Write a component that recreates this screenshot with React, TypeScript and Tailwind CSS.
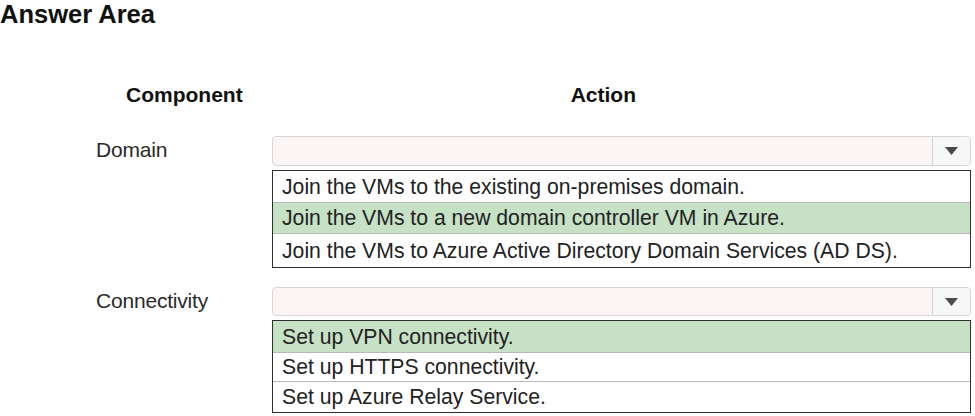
import { ReactNode } from 'react'

interface ChoiceProps {
  label: string
  options: string[]
  picked: number
  top: string
  boxH: string
  rowHeights: string[]
}

function Arrow(): JSX.Element {
  return (
    <svg width="13" height="8" viewBox="0 0 13 8">
      <path d="M0 0 L13 0 L6.5 8 Z" fill="#4a4a4a" />
    </svg>
  )
}

function Row({ children, green, h, last }: { children: ReactNode; green: boolean; h: string; last: boolean }): JSX.Element {
  return (
    <div
      className={`${h} flex items-center pl-[9px] text-[21.2px] leading-none ${
        green ? 'bg-[#c6e1c5]' : 'bg-white'
      } ${last ? '' : 'border-b border-[#b8b8b8]'}`}
    >
      {children}
    </div>
  )
}

function Choice({ label, options, picked, top, boxH, rowHeights }: ChoiceProps): JSX.Element {
  return (
    <div className={`grid grid-cols-[272px_700px] ${top}`}>
      <div className="pl-[96px] pt-[2px] text-[21px] leading-[24px] tracking-[-0.2px] text-[#2a2a2a]">{label}</div>
      <div className="flex flex-col">
        <div className={`flex ${boxH} w-[699px] rounded-[4px] border border-[#d6d6d6] bg-[#fcf5f5]`}>
          <div className="flex-1" />
          <div className="flex w-[38px] items-center justify-center rounded-r-[4px] border-l border-[#d2d2d2] bg-[#f7f7f7]">
            <Arrow />
          </div>
        </div>
        <div className="mt-[4px] w-[699px] border-[1.5px] border-[#2e2e2e] text-[#222]">
          {options.map((o, i) => (
            <Row key={o} green={i === picked} h={rowHeights[i]} last={i === options.length - 1}>
              {o}
            </Row>
          ))}
        </div>
      </div>
    </div>
  )
}

export default function App(): JSX.Element {
  return (
    <div className="h-[416px] w-[975px] overflow-hidden bg-white font-['Liberation_Sans',Arial,sans-serif]">
      <h1 className="text-[25.5px] font-bold leading-[28px] text-[#111]">Answer Area</h1>
      <div className="mt-[55px] flex text-[21px] font-bold leading-[24px] text-[#111]">
        <div className="pl-[126px]">Component</div>
        <div className="pl-[328px]">Action</div>
      </div>
      <Choice
        label="Domain"
        top="mt-[29px]"
        boxH="h-[30px]"
        picked={1}
        rowHeights={['h-[32px]', 'h-[31px]', 'h-[33px]']}
        options={[
          'Join the VMs to the existing on-premises domain.',
          'Join the VMs to a new domain controller VM in Azure.',
          'Join the VMs to Azure Active Directory Domain Services (AD DS).',
        ]}
      />
      <Choice
        label="Connectivity"
        top="mt-[19px]"
        boxH="h-[29px]"
        picked={0}
        rowHeights={['h-[32px]', 'h-[29px]', 'h-[30px]']}
        options={['Set up VPN connectivity.', 'Set up HTTPS connectivity.', 'Set up Azure Relay Service.']}
      />
    </div>
  )
}
